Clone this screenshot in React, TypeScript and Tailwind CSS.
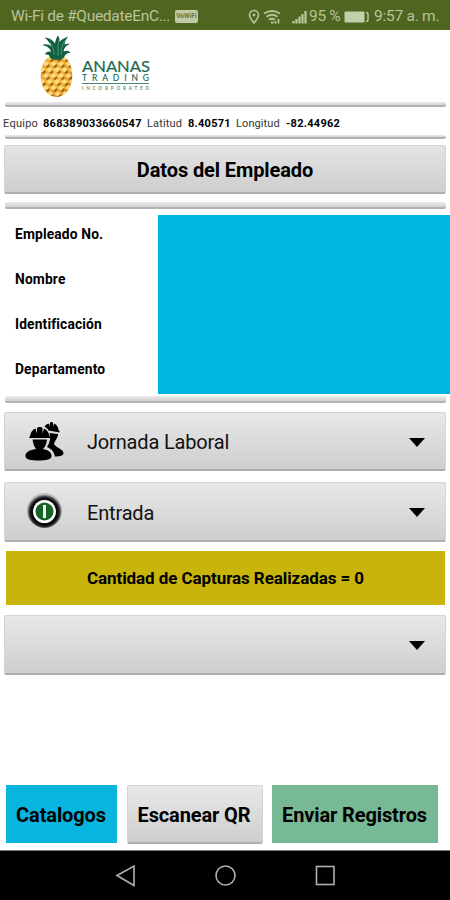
import React from 'react';
import clsx from 'clsx';

interface SpinnerProps {
  label?: string;
  icon?: React.ReactNode;
  className?: string;
}

const fields = ['Empleado No.', 'Nombre', 'Identificación', 'Departamento'];

// Pineapple skin, one entry per row of scales: [y, first x, count]
const scaleRows = [
  [22, 10, 3],
  [28, 6, 4],
  [34, 2, 5],
  [40, 6, 4],
  [46, 2, 5],
  [52, 6, 4],
  [58, 10, 3],
];

function Pineapple() {
  return (
    <>
      <defs>
        <clipPath id="fruit">
          <ellipse cx="16.5" cy="39.5" rx="15.8" ry="21.5" />
        </clipPath>
        <radialGradient id="skin" cx="0.45" cy="0.45" r="0.6">
          <stop offset="0" stopColor="#f7c650" />
          <stop offset="0.75" stopColor="#eda832" />
          <stop offset="1" stopColor="#cd861f" />
        </radialGradient>
      </defs>
      <ellipse cx="16.5" cy="39.5" rx="15.8" ry="21.5" fill="url(#skin)" />
      <g clipPath="url(#fruit)">
        {scaleRows.map(([y, x, count]) =>
          Array.from({ length: count }, (_, i) => (
            <g key={`${y}-${i}`}>
              <path d={`M${x + i * 7.5 - 3} ${y}l3-3 3 2.500-2.500 3z`} fill="#ffdc77" />
              <path d={`M${x + i * 7.5 - 0.5} ${y + 3}l3.500-3 1 2.500-2.500 1.500z`} fill="#a5661c" />
            </g>
          ))
        )}
      </g>
      <path
        d="M10 22c0-3-2-4-5-3.500 1-3 4-3.500 6-2.500-1-4-4-6-9-7 4-1.500 7-.5 9.500 1.500C10 7 8 4 4.500 1.500c5.500.5 8.500 3 10.500 6 .5-3 1.500-6 3-8 1.500 2 1.500 4 1.500 6.500C21.500 3.500 24 2 28 .5c-2 3-3 5-3.500 8 2-1 3.500-1 5.500-.5-4 1.500-6 4-6.500 7.500 2-1 5-1.500 7 1.500-3.500-.5-5 1-7 5-3 2.500-10 2.500-13.500 0z"
        fill="#12603f"
      />
      <path d="M14 19c0-5-1-10-6-14M18 20c0-6 0-10 .5-15M21 19c0-5 1-10 4-15" fill="none" stroke="#4f9676" strokeWidth="1" />
    </>
  );
}

function Logo() {
  return (
    <svg width="112" height="64" viewBox="0 0 112 64" className="block" role="img" aria-label="Ananas Trading Incorporated">
      <Pineapple />
      <g fill="#1d6a52" fontFamily="Lato, 'Liberation Sans', sans-serif">
        <text x="42" y="35.5" fontSize="15.5" textLength="68" lengthAdjust="spacingAndGlyphs" stroke="#1d6a52" strokeWidth="0.2">ANANAS</text>
        <text x="42" y="45" fontSize="8.5" textLength="67" stroke="#1d6a52" strokeWidth="0.15">TRADING</text>
        <rect x="42" y="47" width="67" height="1" fill="#4d8975" />
        <text x="42" y="53.8" fontSize="4.6" fontWeight="700" textLength="67" opacity="0.75">INCORPORATED</text>
      </g>
    </svg>
  );
}

function StatusBar() {
  return (
    <div className="flex h-[30px] items-center bg-[#4f6520] pl-[11px] pr-[11px] pt-[3px] text-[15.5px] text-[#b9c49b]">
      <span className="w-[159px] whitespace-nowrap tracking-[-0.3px]">Wi-Fi de #QuedateEnC...</span>
      <span className="ml-[5px] flex h-[13px] w-[23px] items-center justify-center rounded-[2px] bg-[#c0cba5] text-[6.5px] font-bold text-[#66783c]">VoWiFi</span>
      <div className="ml-auto flex items-center whitespace-nowrap">
        <svg width="62" height="18" viewBox="0 0 62 18" fill="none" stroke="#b9c49b">
          <path d="M7 15C4 11.500 2.500 9.300 2.500 7a4.500 4.500 0 0 1 9 0C11.500 9.300 10 11.500 7 15z" strokeWidth="1.6" />
          <circle cx="7" cy="7" r="1" fill="#b9c49b" />
          <path d="M17 5.500q8-5 16 0M19.500 8.700q5.500-4 11 0M22 11.800q3-2 6 0" strokeWidth="1.9" />
          <path d="M24 14.500h2.500M28.500 13v2.500M31.500 11v4.500" strokeWidth="1.8" />
          <path d="M46.500 15.500v-2.500M49.500 15.500v-4.500M52.500 15.500v-7M55.500 15.500v-9.500M58.500 15.500V3" strokeWidth="2.3" />
        </svg>
        <span className="w-[35px] tracking-[-0.3px]">95 %</span>
        <svg width="25" height="12" viewBox="0 0 25 12">
          <rect x="0.5" y="0.5" width="20" height="11" rx="1" fill="#c3ceaa" />
          <path d="M22 1.500q2 0 2 2v5q0 2-2 2" fill="none" stroke="#b9c49b" strokeWidth="1.5" />
        </svg>
        <span className="ml-[5px] w-[65px] tracking-[-0.25px]">9:57 a. m.</span>
      </div>
    </div>
  );
}

function Divider({ className }: { className?: string }) {
  return <div className={clsx('ml-[5px] mr-1 shrink-0 rounded-[2px] border-b-2 border-[#b2b2b2] bg-linear-to-b from-[#ececec] to-[#d0d0d0]', className)} />;
}

function Caret() {
  return (
    <svg width="16" height="9" viewBox="0 0 16 9">
      <path d="M0 0h16L8 9z" fill="#000" />
    </svg>
  );
}

function Spinner({ label, icon, className }: SpinnerProps) {
  return (
    <button className={clsx('ml-1 mr-1 flex items-center rounded-[2px] border border-b-2 border-[#d4d4d4] border-b-[#aeaeae] bg-linear-to-b from-[#e8e8e8] to-[#cecece] pl-5 pr-[20px] pt-[2px]', className)}>
      <span className="w-[40px]">{icon}</span>
      <span className="ml-[22px] text-[20px] tracking-[-0.17px] text-[#111]">{label}</span>
      <span className="ml-auto">
        <Caret />
      </span>
    </button>
  );
}

function WorkersIcon() {
  return (
    <svg width="40" height="40" viewBox="0 0 40 40" className="block">
      {/* Rear worker */}
      <path d="M19.500 4.500Q21 2 24 1.500l1 3.500V.5L26.500 0l1.500.5V5l1-3.500q4 1.500 4.500 6.500l1 1v1.500l-11-2q-1-2-4-4z" />
      <path d="M24.500 11l8.500 1c0 4-3 6.500-4 10 2 4 9.500 5 9.500 9 0 2.500-3 3.500-8.500 3.500-1-5-3.500-7.500-8-9.500 2.500-4 4-8 2.500-14z" />
      {/* Front worker */}
      <path d="M5 14Q6 8 10.500 6.500l1.500 5V6l1.500-1h2.500l1.500 1v5.500l1.500-5q4.500 2 5.500 7.500l1 2H4z" />
      <path d="M7.500 17.500h14.500q-.5 6-4 9.500c5 1 8.500 3 8.500 7 0 3.500-5 4.500-13 4.500S.5 37.500.5 34c0-4 4-6 10.500-7q-3-4-3.500-9.500z" />
    </svg>
  );
}

function PowerIcon() {
  return (
    <svg width="40" height="40" viewBox="0 0 40 40" className="block">
      <defs>
        <radialGradient id="ring" cy="0.54">
          <stop offset="0.78" stopColor="#0c0c0c" />
          <stop offset="0.88" stopColor="#444" />
          <stop offset="1" stopColor="#c0c0c0" />
        </radialGradient>
      </defs>
      <circle cx="19.500" cy="17.500" r="17.500" fill="url(#ring)" />
      <circle cx="19.500" cy="18.500" r="11.500" fill="#fff" />
      <circle cx="19.500" cy="18.500" r="9" fill="#176325" />
      <rect x="18" y="12" width="3" height="13" fill="#eef6ee" />
    </svg>
  );
}

export default function App() {
  return (
    <div className="flex h-[900px] w-[450px] flex-col overflow-hidden bg-white font-['Roboto','Liberation_Sans',sans-serif] text-black">
      <StatusBar />

      <header className="h-[72px] pl-10 pt-[6px]">
        <Logo />
      </header>

      <Divider className="h-[5px]" />
      <div className="flex h-[28px] items-center gap-[5px] whitespace-nowrap pl-[3px] pt-[6px] text-[11px] text-[#333]">
        <span className="w-[35px] tracking-[0.25px]">Equipo</span>
        <b className="w-[99px] tracking-[0.27px] text-black">868389033660547</b>
        <span className="w-[36px] tracking-[0.15px]">Latitud</span>
        <b className="w-[43px] tracking-[0.27px] text-black">8.40571</b>
        <span className="w-[45px] tracking-[0.1px]">Longitud</span>
        <b className="tracking-[0.27px] text-black">-82.44962</b>
      </div>
      <Divider className="h-[4px]" />

      <button className="ml-1 mr-1 mt-[6px] h-[49px] rounded-[2px] border border-b-2 border-[#d4d4d4] border-b-[#aeaeae] bg-linear-to-b from-[#e4e4e4] to-[#cecece] pt-[2px] text-[20px] font-bold tracking-[-0.1px]">
        Datos del Empleado
      </button>
      <Divider className="mt-[8px] h-[7px]" />

      <section className="mt-[6px] flex h-[179px]">
        <div className="flex w-[158px] flex-col pl-[15px] text-[13.8px] font-bold tracking-[0.15px]">
          {fields.map((field) => (
            <div key={field} className="flex h-[45px] shrink-0 items-center pb-[6px]">
              {field}
            </div>
          ))}
        </div>
        <div className="flex-1 bg-[#00b5e0]" />
      </section>
      <Divider className="mt-[2px] h-[7px]" />

      <Spinner className="mt-[9px] h-[59px]" label="Jornada Laboral" icon={<WorkersIcon />} />
      <Spinner className="mt-[11px] h-[60px]" label="Entrada" icon={<PowerIcon />} />
      <div className="ml-[6px] mr-[5px] mt-[9px] flex h-[54px] items-center justify-center bg-[#c8b40a] pt-[2px] text-[17px] font-bold tracking-[-0.08px]">
        Cantidad de Capturas Realizadas = 0
      </div>
      <Spinner className="mt-[10px] h-[60px]" />

      <div className="mt-[110px] flex h-[59px] whitespace-nowrap text-[20px] font-bold tracking-[-0.12px]">
        <button className="ml-[6px] h-[58px] w-[111px] bg-[#08b5df] pr-[1px] pt-[2px]">Catalogos</button>
        <button className="ml-[10px] h-[59px] w-[136px] rounded-[2px] border border-b-2 border-[#d4d4d4] border-b-[#aeaeae] bg-linear-to-b from-[#e8e8e8] to-[#cecece] pr-[2px] pt-[2px]">
          Escanear QR
        </button>
        <button className="ml-[9px] h-[58px] w-[166px] bg-[#77b995] pr-[1px] pt-[2px]">Enviar Registros</button>
      </div>

      <nav className="mt-auto h-[50px] border-t border-[#777] bg-black">
        <svg width="450" height="49" viewBox="0 0 450 49" fill="none" stroke="#b0b0b0" strokeWidth="1.6">
          <path d="M117 24.500l17-9.500v19.500z" />
          <circle cx="225.500" cy="24.500" r="9.500" />
          <rect x="316.500" y="15.500" width="17.500" height="18" />
        </svg>
      </nav>
    </div>
  );
}
